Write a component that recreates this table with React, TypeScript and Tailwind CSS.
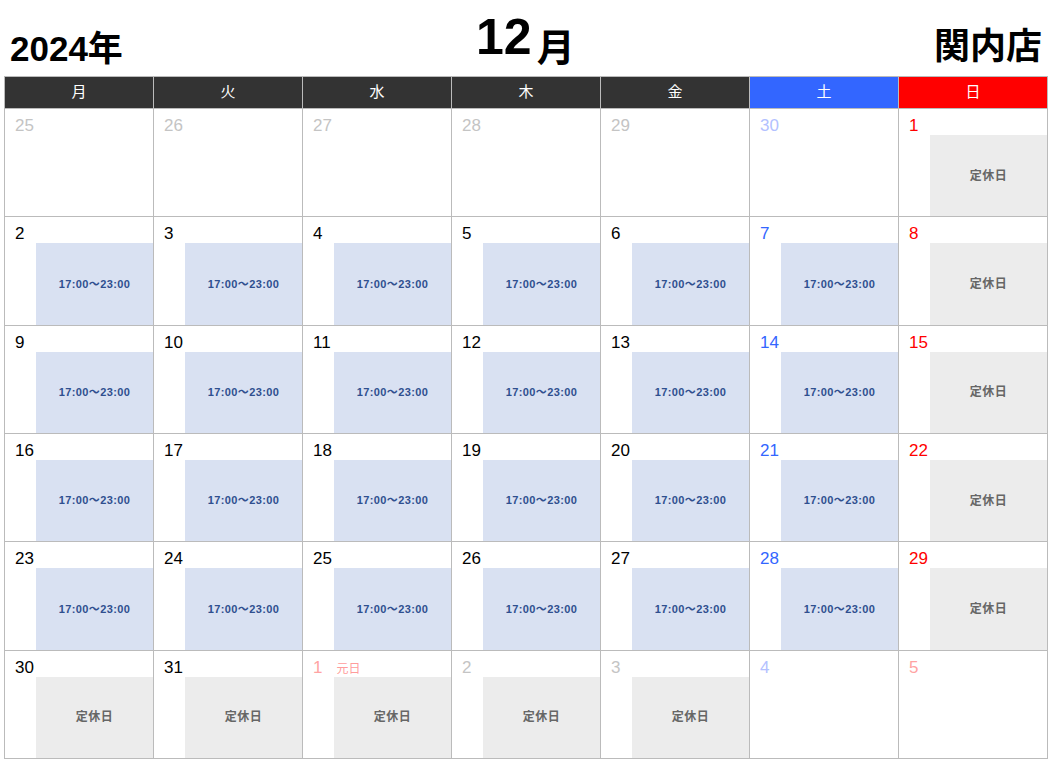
import React from 'react';

type Cell = {
    day: number;
    tone: 'normal' | 'sat' | 'sun' | 'mutedGray' | 'mutedBlue' | 'mutedRed';
    kind: 'open' | 'closed' | 'none';
    note?: string;
};

const weekdays = ['月', '火', '水', '木', '金', '土', '日'];

const toneClass: Record<Cell['tone'], string> = {
    normal: 'text-black',
    sat: 'text-[#3366ff]',
    sun: 'text-[#ff0000]',
    mutedGray: 'text-[#c4c4c4]',
    mutedBlue: 'text-[#b3c1ff]',
    mutedRed: 'text-[#ffa3a3]',
};

const buildWeeks = (): Cell[][] => {
    const cells: Cell[] = [];
    [25, 26, 27, 28, 29].forEach((d) => cells.push({ day: d, tone: 'mutedGray', kind: 'none' }));
    cells.push({ day: 30, tone: 'mutedBlue', kind: 'none' });
    for (let d = 1; d <= 31; d++) {
        const col = cells.length % 7;
        const tone = col === 5 ? 'sat' : col === 6 ? 'sun' : 'normal';
        const closed = col === 6 || d >= 30;
        cells.push({ day: d, tone, kind: closed ? 'closed' : 'open' });
    }
    cells.push({ day: 1, tone: 'mutedRed', kind: 'closed', note: '元日' });
    cells.push({ day: 2, tone: 'mutedGray', kind: 'closed' });
    cells.push({ day: 3, tone: 'mutedGray', kind: 'closed' });
    cells.push({ day: 4, tone: 'mutedBlue', kind: 'none' });
    cells.push({ day: 5, tone: 'mutedRed', kind: 'none' });
    const weeks: Cell[][] = [];
    for (let i = 0; i < cells.length; i += 7) weeks.push(cells.slice(i, i + 7));
    return weeks;
};

const DayCell: React.FC<{ cell: Cell }> = ({ cell }) => (
    <div className="relative border-r border-b border-[#bbbbbb]">
        <div className="flex items-baseline pl-[10px] pt-[7px] h-[26px]">
            <span className={`text-[17px] leading-[20px] ${toneClass[cell.tone]}`}>{cell.day}</span>
            {cell.note && <span className="ml-[14px] text-[12px] text-[#ff9c9c]">{cell.note}</span>}
        </div>
        {cell.kind === 'open' && (
            <div className="absolute left-[31px] right-0 top-[26px] bottom-0 bg-[#d9e1f2] flex items-center justify-center">
                <span className="text-[11px] font-bold text-[#2f4f8f] tracking-[0.4px]">17:00～23:00</span>
            </div>
        )}
        {cell.kind === 'closed' && (
            <div className="absolute left-[31px] right-0 top-[26px] bottom-0 bg-[#ececec] flex items-center justify-center">
                <span className="text-[12px] font-bold text-[#666666] tracking-[0.5px]">定休日</span>
            </div>
        )}
    </div>
);

const App: React.FC = () => {
    const weeks = buildWeeks();
    return (
        <div
            className="bg-white w-[1051px] h-[763px] overflow-hidden"
            style={{ fontFamily: '"Liberation Sans", "Noto Sans CJK JP", sans-serif' }}
        >
            {/* Title */}
            <div className="relative h-[76px] px-[10px] flex items-end justify-between pb-[10px]">
                <div className="text-[35px] leading-none font-bold text-black">2024年</div>
                <div className="absolute left-[476px] top-[12px] flex items-end leading-none font-bold text-black">
                    <span className="text-[50px] leading-none">12</span>
                    <span className="text-[38px] leading-none ml-[5px] mb-[-5px]">月</span>
                </div>
                <div className="text-[36px] leading-none font-bold text-black mr-[-1px] mb-[1px]">関内店</div>
            </div>

            {/* Calendar */}
            <div className="ml-[4px] w-[1044px] border-l border-t border-[#bbbbbb]">
                <div className="grid grid-cols-7 h-[32px]">
                    {weekdays.map((w, i) => (
                        <div
                            key={w}
                            className={`flex items-center justify-center text-white text-[15px] border-r border-b border-[#bbbbbb] ${
                                i === 5 ? 'bg-[#3366ff]' : i === 6 ? 'bg-[#ff0000]' : 'bg-[#333333]'
                            }`}
                        >
                            {w}
                        </div>
                    ))}
                </div>
                <div className="grid grid-cols-7 grid-rows-6 h-[650px]">
                    {weeks.flat().map((c, i) => (
                        <DayCell key={i} cell={c} />
                    ))}
                </div>
            </div>
        </div>
    );
};

export default App;
